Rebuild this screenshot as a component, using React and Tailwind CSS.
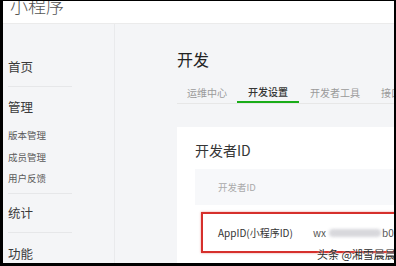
const font = { fontFamily: '"Noto Sans CJK SC", "Noto Sans", sans-serif' };

const menu = [
  { type: "group", label: "首页", mt: "mt-[33px]" },
  { type: "sep", mt: "mt-[9px]" },
  { type: "group", label: "管理", mt: "mt-[10px]" },
  { type: "item", label: "版本管理", mt: "mt-[8px]" },
  { type: "item", label: "成员管理", mt: "mt-[2px]" },
  { type: "item", label: "用户反馈", mt: "mt-[1px]" },
  { type: "sep", mt: "mt-[5px]" },
  { type: "group", label: "统计", mt: "mt-[9px]" },
  { type: "sep", mt: "mt-[9px]" },
  { type: "group", label: "功能", mt: "mt-[11px]" },
];

const tabs = [
  { label: "运维中心", w: "w-[60px]" },
  { label: "开发设置", w: "w-[62px]", active: true },
  { label: "开发者工具", w: "w-[72px]" },
  { label: "接口设置", w: "w-[60px]", left: true },
];

function Sidebar() {
  return (
    <div className="w-[112px] shrink-0 border-r border-[#e9eaec] pl-[5px]">
      {menu.map((m, i) =>
        m.type === "sep" ? (
          <div key={i} className={`${m.mt} h-px w-[64px] bg-[#e6e7e9]`} />
        ) : (
          <div
            key={i}
            className={`${m.mt} flex h-[20px] items-center ${
              m.type === "group"
                ? "text-[12.5px] text-[#3a3a3a]"
                : "text-[9.5px] text-[#5a5a5a]"
            }`}
          >
            {m.label}
          </div>
        )
      )}
    </div>
  );
}

export default function App() {
  return (
    <div
      className="h-[266px] w-[396px] bg-black pb-[3px] pl-[3px] pr-[2px] pt-[1px]"
      style={font}
    >
      <div className="relative flex h-full flex-col overflow-hidden bg-[#f4f5f7]">
        <div className="h-[23px] shrink-0 overflow-hidden border-b border-[#ebebeb] bg-white pl-[7px]">
          <div className="-mt-[8px] text-[18px] font-light leading-[24px] text-[#555]">
            小程序
          </div>
        </div>

        <div className="flex flex-1">
          <Sidebar />

          <div className="flex-1 pl-[62px]">
            <div className="mt-[25px] flex h-[20px] items-center text-[16px] text-[#222]">
              开发
            </div>

            <div className="mt-[12px] flex h-[23px] border-b border-[#e7e7e7] text-[10px]">
              {tabs.map((t) => (
                <div
                  key={t.label}
                  className={`${t.w} flex shrink-0 items-center whitespace-nowrap ${
                    t.left ? "justify-start pl-[10px]" : "justify-center"
                  } ${
                    t.active
                      ? "border-b-2 border-[#1aad19] font-medium text-[#353535]"
                      : "text-[#9a9a9a]"
                  }`}
                >
                  {t.label}
                </div>
              ))}
            </div>

            <div className="mt-[23px] h-[200px] bg-white pl-[18px] pt-[15px]">
              <div className="flex h-[16px] items-center text-[14px] text-[#353535]">
                开发者ID
              </div>

              <div className="mt-[11px] flex h-[36px] items-center bg-[#f7f8fa] pl-[23px] text-[9.5px] text-[#aaa]">
                开发者ID
              </div>

              <div className="ml-[6px] mt-[7px] flex h-[41px] w-[220px] items-center whitespace-nowrap border-2 border-[#d6302c] pl-[15px] text-[10px] text-[#333] shadow-[0_0_2px_rgba(214,48,44,0.5)]">
                <span className="w-[95px] shrink-0">AppID(小程序ID)</span>
                <span className="text-[#555]">wx</span>
                <span className="ml-[3px] h-[8px] w-[52px] shrink-0 rounded-full bg-[#d8d8dc] blur-[1.5px]" />
                <span className="ml-[1px] text-[#555]">b05</span>
              </div>
            </div>
          </div>
        </div>

        <div className="absolute bottom-[2px] left-[314px] whitespace-nowrap text-[11px] leading-[14px] text-[#2a2a2a] [text-shadow:0_0_2px_#fff]">
          头条 @湘雪晨晨
        </div>
      </div>
    </div>
  );
}
